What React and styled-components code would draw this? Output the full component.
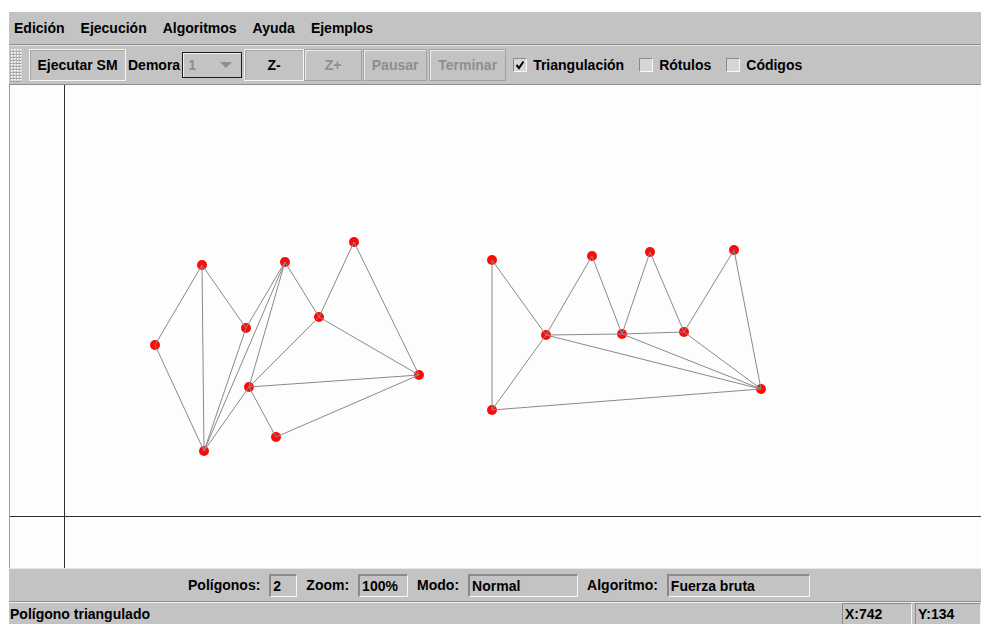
import React from "react";
import styled, { createGlobalStyle } from "styled-components";

const GlobalStyle = createGlobalStyle`
  html, body {
    margin: 0;
    padding: 0;
    background: #ffffff;
  }
  body {
    font-family: "Liberation Sans", Arial, sans-serif;
    font-weight: bold;
    font-size: 14px;
    color: #000;
  }
`;

const Frame = styled.div`
  margin: 12px 0 0 9px;
  width: 972px;
  height: 612px;
  background: #c3c3c3;
  display: flex;
  flex-direction: column;
  overflow: hidden;
`;

const MenuBar = styled.div`
  flex: none;
  height: 32px;
  display: flex;
  align-items: center;
  gap: 16px;
  padding-left: 5px;
  border-bottom: 1px solid #8e8e8e;
  box-sizing: content-box;
`;

const MenuItem = styled.span`
  white-space: nowrap;
`;

const ToolBar = styled.div`
  flex: none;
  height: 38px;
  display: flex;
  align-items: center;
  border-top: 1px solid #e6e6e6;
  border-bottom: 1px solid #8e8e8e;
  box-sizing: content-box;
`;

const Grip = styled.div`
  width: 12px;
  height: 33px;
  margin: 0 7px 0 1px;
  background-image: conic-gradient(#f2f2f2 0 25%, #c3c3c3 0 50%, #9a9a9a 0 75%, #c3c3c3 0);
  background-size: 3px 3px;
`;

const Button = styled.div`
  width: ${(p) => p.w}px;
  height: 32px;
  box-sizing: border-box;
  display: flex;
  align-items: center;
  justify-content: center;
  white-space: nowrap;
  margin-left: ${(p) => p.ml || 0}px;
  color: ${(p) => (p.disabled ? "#8e8e8e" : "#000")};
  border: 1px solid ${(p) => (p.disabled ? "#a2a2a2" : "#f6f6f6")};
  box-shadow: inset 1px 1px 0 ${(p) => (p.disabled ? "#ececec" : "#a5a5a5")};
`;

const Label = styled.span`
  white-space: nowrap;
  margin-left: ${(p) => p.ml || 0}px;
`;

const Combo = styled.div`
  width: 60px;
  height: 26px;
  box-sizing: border-box;
  margin-left: 2px;
  border: 1px solid #1c1c1c;
  box-shadow: inset 1px 1px 0 #f0f0f0;
  display: flex;
  align-items: center;
  justify-content: space-between;
  padding: 0 9px 0 5px;
  color: #8e8e8e;
`;

const Check = styled.label`
  display: flex;
  align-items: center;
  gap: 6px;
  margin-left: ${(p) => p.ml}px;
  white-space: nowrap;
`;

const Box = styled.span`
  width: 14px;
  height: 14px;
  box-sizing: border-box;
  border-top: 1px solid #8a8a8a;
  border-left: 1px solid #8a8a8a;
  border-bottom: 1px solid #fafafa;
  border-right: 1px solid #fafafa;
  background: #d6d6d6;
  display: flex;
  align-items: center;
  justify-content: center;
`;

const Canvas = styled.div`
  flex: none;
  height: 483px;
  background: #fdfdfd;
  border-left: 1px solid #9a9a9a;
  overflow: hidden;

  svg {
    display: block;
  }
`;

const InfoBar = styled.div`
  flex: none;
  height: 32px;
  display: flex;
  align-items: center;
  gap: 9px;
  padding-left: 179px;
  border-top: 1px solid #e8e8e8;
  border-bottom: 1px solid #8e8e8e;
  box-sizing: content-box;
`;

const Field = styled.div`
  width: ${(p) => p.w}px;
  height: 23px;
  box-sizing: border-box;
  border-top: 2px solid #8a8a8a;
  border-left: 2px solid #8a8a8a;
  border-bottom: 1px solid #f6f6f6;
  border-right: 1px solid #f6f6f6;
  display: flex;
  align-items: center;
  padding-left: 2px;
  white-space: nowrap;
`;

const StatusBar = styled.div`
  flex: none;
  height: 21px;
  display: flex;
  align-items: stretch;
  border-top: 1px solid #f0f0f0;
`;

const StatusText = styled.div`
  flex: 1;
  display: flex;
  align-items: center;
  padding-left: 1px;
  white-space: nowrap;
`;

const StatusCell = styled.div`
  width: ${(p) => p.w}px;
  box-sizing: border-box;
  margin-left: 3px;
  border-left: 1px solid #8a8a8a;
  border-top: 1px solid #8a8a8a;
  border-right: 1px solid #f4f4f4;
  display: flex;
  align-items: center;
  padding-left: 2px;
`;

const left = {
  A: [202, 266], B: [155, 346], C: [204, 452], D: [246, 329], E: [285, 263],
  F: [319, 318], G: [354, 243], H: [419, 376], I: [249, 388], J: [276, 438],
};
const leftEdges = [
  "AB", "BC", "AC", "AD", "DC", "DE", "EC", "EI", "EF", "FG", "GH", "FH", "FI", "IH", "IJ", "JH", "IC",
];

const right = {
  a: [492, 261], b: [492, 411], c: [546, 336], d: [592, 257], e: [622, 335],
  f: [650, 253], g: [684, 333], h: [734, 251], i: [761, 390],
};
const rightEdges = [
  "ac", "ab", "bc", "cd", "de", "ef", "fg", "gh", "hi", "bi", "ce", "eg", "ci", "ei", "gi",
];

function Polygon({ pts, edges }) {
  return (
    <g>
      {Object.keys(pts).map((k) => (
        <circle key={k} cx={pts[k][0]} cy={pts[k][1]} r="5" fill="#ff0a0a" />
      ))}
      {edges.map((e) => {
        const [p, q] = [pts[e[0]], pts[e[1]]];
        return (
          <line key={e} x1={p[0]} y1={p[1]} x2={q[0]} y2={q[1]} stroke="#8a8a8a" strokeWidth="1" />
        );
      })}
    </g>
  );
}

function CheckMark() {
  return (
    <svg width="10" height="10" viewBox="0 0 10 10">
      <path d="M1.5 5 L4 8 L8.5 1.5" fill="none" stroke="#000" strokeWidth="2" />
    </svg>
  );
}

export default function App() {
  return (
    <>
      <GlobalStyle />
      <Frame>
        <MenuBar>
          <MenuItem>Edición</MenuItem>
          <MenuItem>Ejecución</MenuItem>
          <MenuItem>Algoritmos</MenuItem>
          <MenuItem>Ayuda</MenuItem>
          <MenuItem>Ejemplos</MenuItem>
        </MenuBar>
        <ToolBar>
          <Grip />
          <Button w={97}>Ejecutar SM</Button>
          <Label ml={2}>Demora</Label>
          <Combo>
            <span>1</span>
            <svg width="12" height="7" viewBox="0 0 12 7">
              <path d="M0 0 H12 L6 6 Z" fill="#8e8e8e" />
            </svg>
          </Combo>
          <Button w={60} ml={2}>Z-</Button>
          <Button w={58} disabled>Z+</Button>
          <Button w={64} ml={1} disabled>Pausar</Button>
          <Button w={77} ml={2} disabled>Terminar</Button>
          <Check ml={7}>
            <Box><CheckMark /></Box>
            Triangulación
          </Check>
          <Check ml={15}>
            <Box />
            Rótulos
          </Check>
          <Check ml={15}>
            <Box />
            Códigos
          </Check>
        </ToolBar>
        <Canvas>
          <svg width="971" height="483">
            <g transform="translate(-10 -86)">
              <line x1="64.5" y1="86" x2="64.5" y2="569" stroke="#2e2e2e" />
              <line x1="10" y1="517.5" x2="981" y2="517.5" stroke="#2e2e2e" />
              <Polygon pts={left} edges={leftEdges} />
              <Polygon pts={right} edges={rightEdges} />
            </g>
          </svg>
        </Canvas>
        <InfoBar>
          <Label>Polígonos:</Label>
          <Field w={28}>2</Field>
          <Label>Zoom:</Label>
          <Field w={50}>100%</Field>
          <Label>Modo:</Label>
          <Field w={110}>Normal</Field>
          <Label>Algoritmo:</Label>
          <Field w={143}>Fuerza bruta</Field>
        </InfoBar>
        <StatusBar>
          <StatusText>Polígono triangulado</StatusText>
          <StatusCell w={70}>X:742</StatusCell>
          <StatusCell w={66}>Y:134</StatusCell>
        </StatusBar>
      </Frame>
    </>
  );
}
